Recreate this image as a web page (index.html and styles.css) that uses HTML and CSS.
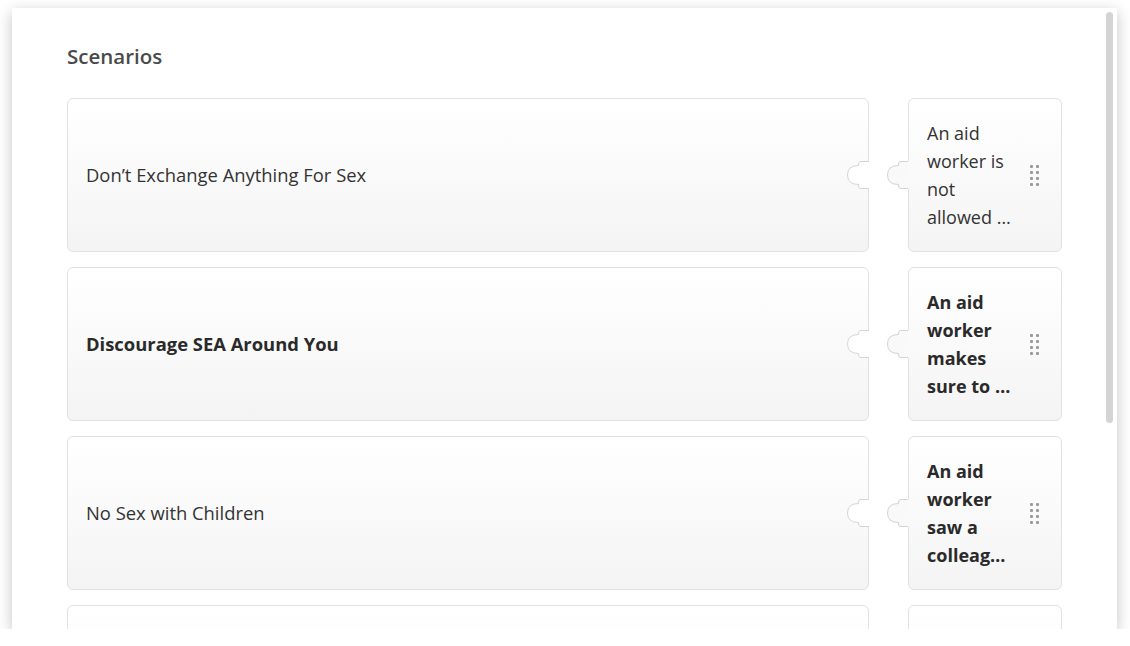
FILE: index.html
```html
<!DOCTYPE html>
<html lang="en">
<head>
<meta charset="utf-8">
<title>Scenarios</title>
<link rel="stylesheet" href="styles.css">
</head>
<body>
<div class="panel">
  <h2 class="title">Scenarios</h2>
  <div class="rows">
    <div class="row">
      <div class="card card-main">
        <span class="label">Don’t Exchange Anything For Sex</span>
        <svg class="notch" width="24" height="32" viewBox="0 0 24 32"><path class="fill" d="M24,2 H15 Q13,2 13,6 Q2,6 2,16 Q2,26 13,26 Q13,30 15,30 H24 Z"/><path class="line" d="M24,2.5 H15 Q13.5,2.5 13.5,6.5 Q2.5,6.5 2.5,16 Q2.5,25.5 13.5,25.5 Q13.5,29.5 15,29.5 H24"/></svg>
      </div>
      <div class="card card-piece">
        <svg class="tab" width="24" height="32" viewBox="0 0 24 32"><path class="fill" d="M24,2 H15 Q13,2 13,6 Q2,6 2,16 Q2,26 13,26 Q13,30 15,30 H24 Z"/><path class="line" d="M23,2.5 H15 Q13.5,2.5 13.5,6.5 Q2.5,6.5 2.5,16 Q2.5,25.5 13.5,25.5 Q13.5,29.5 15,29.5 H23"/></svg>
        <span class="piece-text">An aid worker is not allowed&nbsp;…</span>
        <span class="handle"><i></i><i></i><i></i><i></i><i></i><i></i><i></i><i></i></span>
      </div>
    </div>
    <div class="row">
      <div class="card card-main">
        <span class="label bold">Discourage SEA Around You</span>
        <svg class="notch" width="24" height="32" viewBox="0 0 24 32"><path class="fill" d="M24,2 H15 Q13,2 13,6 Q2,6 2,16 Q2,26 13,26 Q13,30 15,30 H24 Z"/><path class="line" d="M24,2.5 H15 Q13.5,2.5 13.5,6.5 Q2.5,6.5 2.5,16 Q2.5,25.5 13.5,25.5 Q13.5,29.5 15,29.5 H24"/></svg>
      </div>
      <div class="card card-piece">
        <svg class="tab" width="24" height="32" viewBox="0 0 24 32"><path class="fill" d="M24,2 H15 Q13,2 13,6 Q2,6 2,16 Q2,26 13,26 Q13,30 15,30 H24 Z"/><path class="line" d="M23,2.5 H15 Q13.5,2.5 13.5,6.5 Q2.5,6.5 2.5,16 Q2.5,25.5 13.5,25.5 Q13.5,29.5 15,29.5 H23"/></svg>
        <span class="piece-text bold">An aid worker makes sure to&nbsp;…</span>
        <span class="handle"><i></i><i></i><i></i><i></i><i></i><i></i><i></i><i></i></span>
      </div>
    </div>
    <div class="row">
      <div class="card card-main">
        <span class="label">No Sex with Children</span>
        <svg class="notch" width="24" height="32" viewBox="0 0 24 32"><path class="fill" d="M24,2 H15 Q13,2 13,6 Q2,6 2,16 Q2,26 13,26 Q13,30 15,30 H24 Z"/><path class="line" d="M24,2.5 H15 Q13.5,2.5 13.5,6.5 Q2.5,6.5 2.5,16 Q2.5,25.5 13.5,25.5 Q13.5,29.5 15,29.5 H24"/></svg>
      </div>
      <div class="card card-piece">
        <svg class="tab" width="24" height="32" viewBox="0 0 24 32"><path class="fill" d="M24,2 H15 Q13,2 13,6 Q2,6 2,16 Q2,26 13,26 Q13,30 15,30 H24 Z"/><path class="line" d="M23,2.5 H15 Q13.5,2.5 13.5,6.5 Q2.5,6.5 2.5,16 Q2.5,25.5 13.5,25.5 Q13.5,29.5 15,29.5 H23"/></svg>
        <span class="piece-text bold">An aid worker saw a colleag…</span>
        <span class="handle"><i></i><i></i><i></i><i></i><i></i><i></i><i></i><i></i></span>
      </div>
    </div>
    <div class="row">
      <div class="card card-main"></div>
      <div class="card card-piece"></div>
    </div>
  </div>
  <div class="scrollbar"></div>
</div>
</body>
</html>
```
FILE: styles.css
```css
html, body {
  margin: 0;
  background: #ffffff;
}
body {
  padding: 8px 13px 0 12px;
  font-family: "Open Sans", "Liberation Sans", sans-serif;
  color: #333333;
}
.panel {
  position: relative;
  height: 621px;
  box-sizing: border-box;
  padding: 34px 55px 0 55px;
  background: #ffffff;
  box-shadow: 0 4px 14px rgba(0, 0, 0, 0.24);
  overflow: hidden;
}
.title {
  margin: 0 0 28px 0;
  font-size: 20.5px;
  line-height: 28px;
  font-weight: 600;
  color: #4a4a4a;
}
.rows {
  display: flex;
  flex-direction: column;
  gap: 15px;
}
.row {
  display: flex;
  gap: 39px;
  height: 154px;
  flex-shrink: 0;
}
.card {
  position: relative;
  box-sizing: border-box;
  height: 154px;
  border: 1px solid #e1e1e1;
  border-radius: 6px;
  background: linear-gradient(180deg, #ffffff 0%, #f4f4f4 100%);
  display: flex;
  align-items: center;
}
.card-main {
  flex: 1;
  padding: 0 18px;
}
.card-piece {
  width: 154px;
  flex-shrink: 0;
  padding: 0 22px 0 18px;
  justify-content: space-between;
}
.label {
  font-size: 18.4px;
  line-height: 28px;
  color: #333333;
}
.bold {
  font-weight: 700;
  color: #2a2a2a;
}
.piece-text {
  width: 92px;
  font-size: 18px;
  line-height: 28px;
}
.handle {
  display: grid;
  grid-template-columns: 3px 3px;
  grid-auto-rows: 3px;
  column-gap: 3px;
  row-gap: 3px;
}
.handle i {
  display: block;
  width: 3px;
  height: 3px;
  border-radius: 1px;
  background: #9a9a9a;
}
.notch, .tab {
  position: absolute;
  top: 60px;
}
.notch {
  right: -1px;
}
.notch .fill {
  fill: #ffffff;
}
.tab {
  left: -24px;
}
.tab .fill {
  fill: #f9f9f9;
}
.line {
  fill: none;
  stroke: #d4d4d4;
  stroke-width: 1;
}
.scrollbar {
  position: absolute;
  top: 4px;
  right: 4px;
  width: 7px;
  height: 411px;
  border-radius: 4px;
  background: #d4d4d4;
}
```
